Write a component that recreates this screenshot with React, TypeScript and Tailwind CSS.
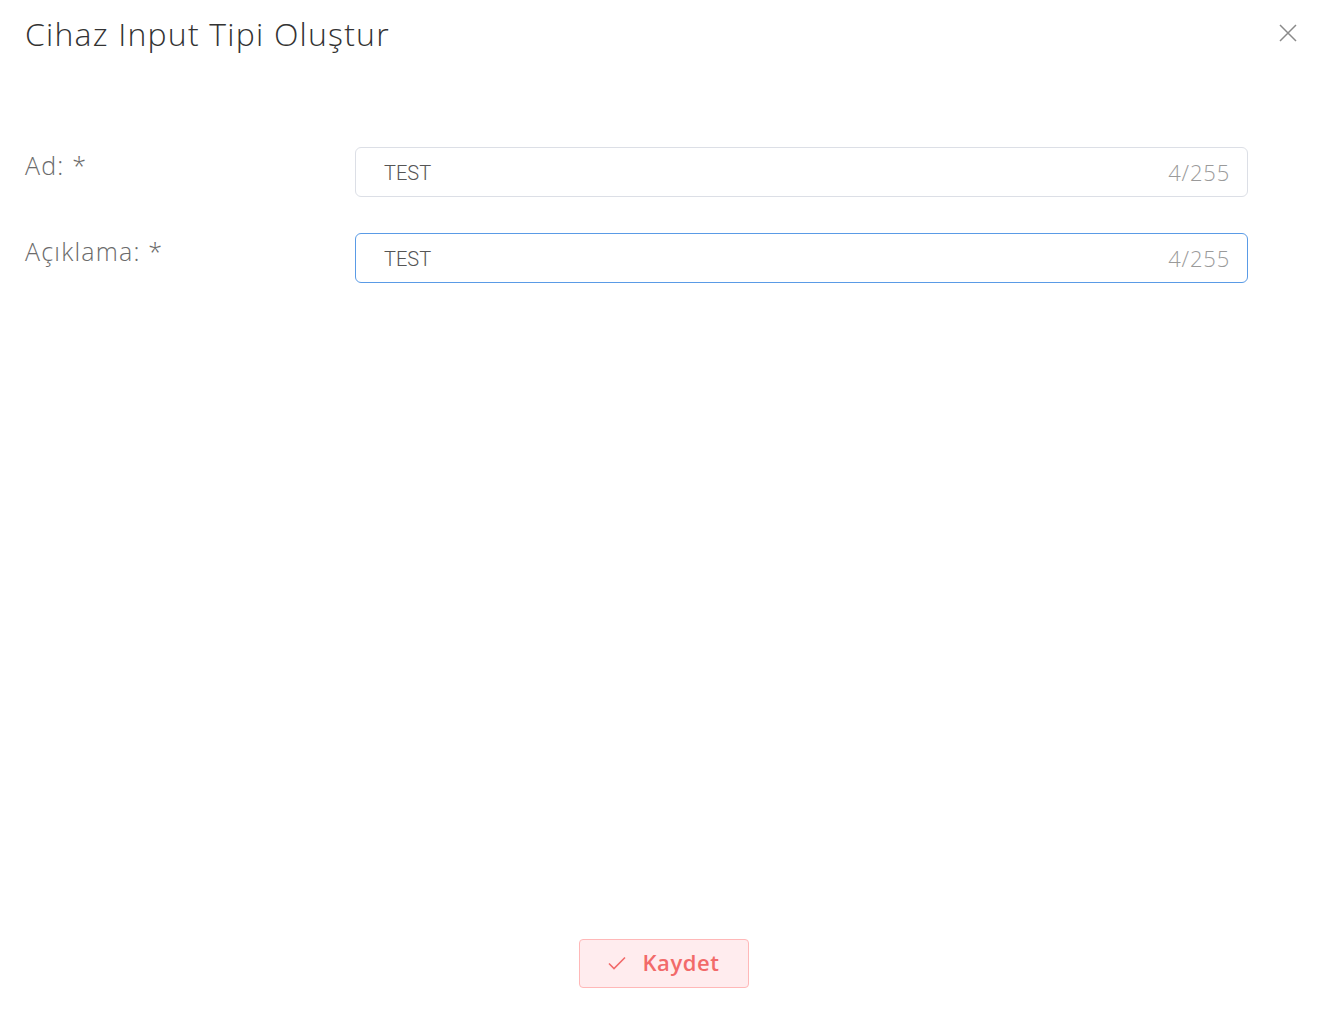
import React from "react";

function Field({ label, value, focused }: { label: string; value: string; focused?: boolean }) {
  return (
    <div className="flex items-start">
      <div className="w-[330px] pt-[1px] text-[25px] leading-[34px] tracking-[1.2px] text-[#6b6b6b] font-light">{label}</div>
      <div
        className={
          "flex h-[50px] w-[893px] items-center rounded-[6px] border bg-white pl-[28px] pr-[17px] " +
          (focused ? "border-[#5a9be6]" : "border-[#dcdfe6]")
        }
      >
        <span className="flex-1 pt-[2px] text-[20px] text-[#555] font-light" style={{ fontFamily: "Roboto, 'Liberation Sans', sans-serif" }}>
          {value}
        </span>
        <span className="text-[22px] tracking-[0.8px] text-[#9a9a9a] font-light">4/255</span>
      </div>
    </div>
  );
}

export default function App() {
  return (
    <div
      className="relative flex h-[1030px] w-[1334px] flex-col bg-white"
      style={{ fontFamily: "'Open Sans', 'Noto Sans', sans-serif" }}
    >
      <div className="flex items-start justify-between pl-[25px] pr-[37px] pt-[12px]">
        <h1 className="text-[32px] font-light leading-[44px] tracking-[1.2px] text-[#333]">Cihaz Input Tipi Oluştur</h1>
        <button className="mt-[12px] text-[#8a8a8a]">
          <svg width="18" height="18" viewBox="0 0 18 18" fill="none" stroke="currentColor" strokeWidth="1.5">
            <path d="M1 1L17 17M17 1L1 17" />
          </svg>
        </button>
      </div>
      <div className="mt-[91px] flex flex-col gap-[36px] pl-[25px]">
        <Field label="Ad: *" value="TEST" />
        <Field label="Açıklama: *" value="TEST" focused />
      </div>
      <div className="mt-auto mb-[42px] flex justify-center pr-[6px]">
        <button className="flex h-[49px] w-[170px] items-center justify-center gap-[16px] rounded-[4px] border border-[#ffb8b8] bg-[#ffecee] pb-[4px] text-[22px] font-semibold tracking-[0.6px] text-[#f26a6a]">
          <svg className="mt-[2px]" width="18" height="14" viewBox="0 0 18 14" fill="none" stroke="currentColor" strokeWidth="1.6">
            <path d="M1 7.5L6 12.5L17 1.5" />
          </svg>
          <span className="leading-none">Kaydet</span>
        </button>
      </div>
    </div>
  );
}
